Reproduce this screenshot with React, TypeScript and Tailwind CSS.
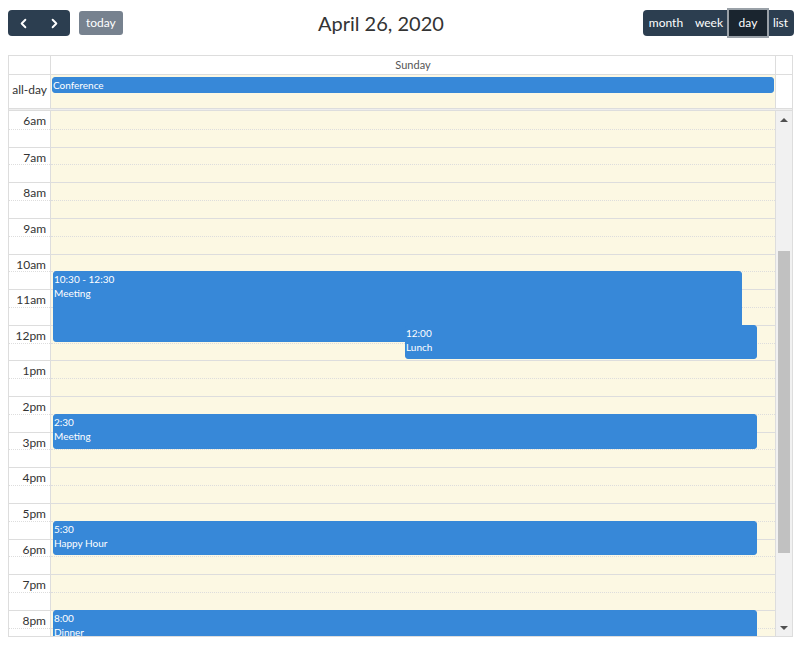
import { ChevronLeft, ChevronRight } from "lucide-react";

const SLOT = 17.82;
const HOUR = SLOT * 2;
const START = 6;

const hours = ["6am", "7am", "8am", "9am", "10am", "11am", "12pm", "1pm", "2pm", "3pm", "4pm", "5pm", "6pm", "7pm", "8pm", "9pm"];

interface Ev {
  time: string;
  title: string;
  start: number;
  end: number;
  left: number;
  right: number;
}

const events: Ev[] = [
  { time: "10:30 - 12:30", title: "Meeting", start: 10.5, end: 12.5, left: 2, right: 33 },
  { time: "12:00", title: "Lunch", start: 12, end: 13, left: 354, right: 18 },
  { time: "2:30", title: "Meeting", start: 14.5, end: 15.5, left: 2, right: 18 },
  { time: "5:30", title: "Happy Hour", start: 17.5, end: 18.5, left: 2, right: 18 },
  { time: "8:00", title: "Dinner", start: 20, end: 21, left: 2, right: 18 },
];

export default function App() {
  return (
    <div
      className="w-[800px] h-[652px] bg-white pl-2 pr-[7px] pt-[10px] text-[#333]"
      style={{ fontFamily: "Lato, 'Open Sans', sans-serif" }}
    >
      {/* toolbar */}
      <div className="flex items-center justify-between h-[26px]">
        <div className="flex items-center">
          <div className="flex rounded-[4px] bg-[#2c3e50] overflow-hidden">
            <button className="w-[31px] h-[26px] flex items-center justify-center text-white">
              <ChevronLeft size={15} strokeWidth={3} />
            </button>
            <button className="w-[31px] h-[26px] flex items-center justify-center text-white">
              <ChevronRight size={15} strokeWidth={3} />
            </button>
          </div>
          <button className="ml-[9px] h-[24px] px-[7px] rounded-[3px] bg-[#77828f] text-white text-[12px]">
            today
          </button>
        </div>
        <div className="text-[20px] text-[#333] mr-[4px]">April 26, 2020</div>
        <div className="flex rounded-[4px] bg-[#2c3e50] h-[26px] text-white text-[12px] mr-[-1px]">
          <button className="w-[46px] h-full rounded-l-[4px]">month</button>
          <button className="w-[40px] h-full">week</button>
          <button className="w-[38px] h-full bg-[#1a252f] ring-2 ring-[#9aa1a8]">day</button>
          <button className="w-[27px] h-full">list</button>
        </div>
      </div>

      {/* calendar */}
      <div className="mt-[19px] border border-[#ddd] h-[582px] flex flex-col">
        {/* header */}
        <div className="flex h-[19px] border-b border-[#ddd]">
          <div className="w-[42px] border-r border-[#ddd]" />
          <div className="flex-1 flex items-center justify-center text-[11px] text-[#555]">Sunday</div>
          <div className="w-[17px] border-l border-[#ddd]" />
        </div>

        {/* all-day */}
        <div className="flex h-[33px]">
          <div className="w-[42px] border-r border-[#ddd] flex items-center justify-end pr-[3px] pb-[3px] text-[12px]">
            all-day
          </div>
          <div className="flex-1 bg-[#fcf8e3] pt-[2px] pl-[1px] pr-[1px]">
            <div className="h-[16px] rounded-[3px] bg-[#3788d8] border border-[#3788d8] text-white text-[10px] leading-[14px] px-0">
              Conference
            </div>
          </div>
          <div className="w-[17px] border-l border-[#ddd]" />
        </div>

        {/* divider */}
        <div className="h-[3px] bg-[#eee] border-y border-[#ddd]" />

        {/* time grid */}
        <div className="flex flex-1 overflow-hidden">
          <div className="flex flex-1 overflow-hidden">
            <div className="w-[42px] shrink-0 border-r border-[#ddd]">
              {hours.map((h, i) => (
                <div key={h}>
                  <div
                    className={`h-[17.82px] text-[12px] text-right pr-[4px] leading-[19px] ${i === 0 ? "" : "border-t border-[#ddd]"}`}
                  >
                    {h}
                  </div>
                  <div className="h-[17.82px] border-t border-dotted border-[#ddd]" />
                </div>
              ))}
            </div>
            <div className="relative flex-1 bg-[#fcf8e3]">
              {hours.map((h, i) => (
                <div key={h}>
                  <div className={`h-[17.82px] ${i === 0 ? "" : "border-t border-[#ddd]"}`} />
                  <div className="h-[17.82px] border-t border-dotted border-[#ddd]" />
                </div>
              ))}
              {events.map((e) => (
                <div
                  key={e.time}
                  className="absolute rounded-[3px] bg-[#3788d8] border border-[#3788d8] text-white text-[10px] leading-[14px] px-0 overflow-hidden"
                  style={{
                    top: (e.start - START) * HOUR,
                    height: (e.end - e.start) * HOUR - 1,
                    left: e.left,
                    right: e.right,
                  }}
                >
                  <div>{e.time}</div>
                  <div>{e.title}</div>
                </div>
              ))}
            </div>
          </div>

          {/* scrollbar */}
          <div className="w-[17px] shrink-0 border-l border-[#ddd] bg-[#f1f1f1] flex flex-col">
            <div className="h-[17px] flex items-center justify-center">
              <div className="w-0 h-0 border-x-[4px] border-x-transparent border-b-[4px] border-b-[#505050]" />
            </div>
            <div className="flex-1">
              <div className="mt-[123px] mx-[2px] h-[302px] bg-[#c1c1c1]" />
            </div>
            <div className="h-[17px] flex items-center justify-center">
              <div className="w-0 h-0 border-x-[4px] border-x-transparent border-t-[4px] border-t-[#505050]" />
            </div>
          </div>
        </div>
      </div>
    </div>
  );
}
